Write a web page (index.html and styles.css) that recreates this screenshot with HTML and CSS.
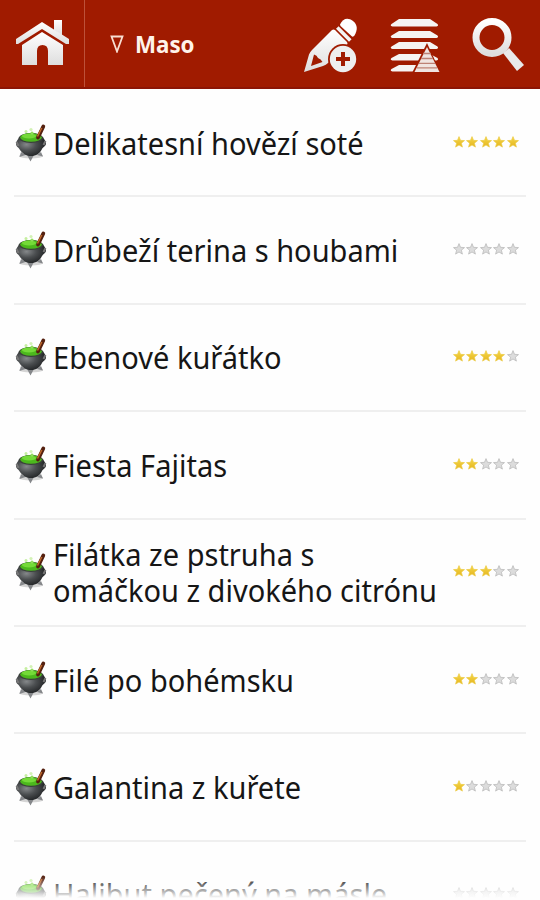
FILE: index.html
```html
<!DOCTYPE html>
<html lang="cs">
<head>
  <meta charset="UTF-8">
  <meta name="viewport" content="width=device-width, initial-scale=1.0">
  <title>Maso</title>
  <link rel="stylesheet" href="styles.css">
</head>
<body>
  <!-- shared icons -->
  <svg class="sprite" aria-hidden="true">
    <defs>
      <linearGradient id="metal" x1="0" y1="0" x2="0" y2="1">
        <stop offset="0" stop-color="#fff"/>
        <stop offset="1" stop-color="#dedede"/>
      </linearGradient>
      <radialGradient id="iron" cx="0.35" cy="0.4" r="0.7">
        <stop offset="0" stop-color="#85888a"/>
        <stop offset="0.45" stop-color="#4b4e50"/>
        <stop offset="1" stop-color="#1c1e20"/>
      </radialGradient>
      <linearGradient id="gold" x1="0" y1="0" x2="0" y2="1">
        <stop offset="0" stop-color="#f5d84a"/>
        <stop offset="1" stop-color="#e5b51f"/>
      </linearGradient>
    </defs>
    <symbol id="pot" viewBox="0 0 32 40">
      <ellipse cx="16" cy="33" rx="12" ry="2.500" fill="#999" opacity="0.4"/>
      <path d="M6 29l-1.500 5 6-2zM26 29l2 4.500-6-1.500zM12 32l3.500 6.500L19 32z" fill="#85878a"/>
      <path d="M4 14C3 17 1 18 1 21c0 2.500 2 3 3 4.500 3 5 7 7.500 12 7.500s9-2.500 11-7c1-2 4-3 4-5.500 0-3-2-3.500-3-6.500z" fill="url(#iron)"/>
      <path d="M1.500 19l2 4M30.500 18l-2 4" stroke="#777" stroke-width="2"/>
      <ellipse cx="16" cy="15" rx="12" ry="5" fill="#3a423a"/>
      <ellipse cx="16" cy="14.500" rx="10.800" ry="4.200" fill="#4cb81d"/>
      <ellipse cx="14" cy="13" rx="7" ry="2.400" fill="#74da38"/>
      <circle cx="11" cy="8.500" r="1.500" fill="#c5efa0"/>
      <circle cx="16" cy="6.500" r="1.600" fill="#d3f2b5"/>
      <circle cx="17" cy="10" r="1.600" fill="#90dc5c"/>
      <path d="M23 14.500L28.300 3.500" stroke="#54200f" stroke-width="3.800" stroke-linecap="round"/>
      <path d="M22.500 13.500l4.300-8.500" stroke="#c1682a" stroke-width="1.500"/>
    </symbol>
    <symbol id="star" viewBox="0 0 12 12">
      <path d="M6 .6l1.500 3.700 4 .3-3.100 2.600 1 3.900L6 9l-3.400 2.100 1-3.900L.5 4.600l4-.3z"/>
    </symbol>
  </svg>

  <header class="header">
    <a class="home" href="#" aria-label="Domů">
      <svg width="54" height="48" viewBox="0 0 54 48" fill="url(#metal)">
        <path d="M38 1h8v16l-8-6z"/>
        <path d="M26 3L0 20v5h2L26 10l24 15h3v-5z"/>
        <path d="M26 13L6 26v20h15V32q0-6 5.500-6t5.500 6v14h15V26z"/>
      </svg>
    </a>
    <div class="category"><svg width="14" height="18" viewBox="0 0 14 18"><path d="M1.500 1.500h11L7 16.500z" fill="none" stroke="#f8dfd2" stroke-width="1.800"/></svg><span>Maso</span></div>
    <nav class="actions">
      <svg width="54" height="56" viewBox="0 0 54 56">
        <path d="M0 55L5 37.500Q6 35 8 33L28 13q1.500-1 3 0L43 25q1 1.500 0 3L24 46q-2 2-5 3z" fill="url(#metal)"/>
        <path d="M10 37.500q3 .5 4 3.500 3 1 4.500 4L7 49z" fill="#a01b00"/>
        <path d="M33.300 10.500l13 13" stroke="#f4f4f4" stroke-width="3.600"/>
        <path d="M36 7.500C39 1 44 0 49 4s4.500 9 1.500 14.500q-1 1.500-2.500 1L36.500 9z" fill="#fff"/>
        <circle cx="39" cy="42" r="15" fill="#a01b00"/>
        <circle cx="39" cy="42" r="13.200" fill="#eee"/>
        <path d="M39 35v14M32 42h14" stroke="#a01b00" stroke-width="4"/>
      </svg>
      <svg width="50" height="56" viewBox="0 0 50 56">
        <path d="M9 2h31l7.500 5q1.500 2-1 2.500h-44Q-.5 9 1.500 7zM9 14h31l7.500 4.500q1.500 2-1 2.500h-44q-3-.5-1-2.500zM9 25h31l7.500 4.500q1.500 2-1 2.500h-44q-3-.5-1-2.500zM9 37h31l7.500 4q1.500 2-1 2.500h-44q-3-.5-1-2.500zM9 48h31l7.500 4q1.500 2-1 2.500h-44q-3-.5-1-2.500z" fill="#f6f4f3"/>
        <path d="M37 26L22 56h16l10-6z" fill="#a01b00"/>
        <path d="M37 30L24.500 55h25z" fill="#f0e4e1"/>
        <path d="M33 36.500h8M31 41.500h12M29 46.300h16M27 50.800h20" stroke="#bd8175" stroke-width="1.300"/>
      </svg>
      <svg width="54" height="56" viewBox="0 0 54 56">
        <path d="M31 36l6-5 15 17-7 6z" fill="#e9e9e9"/>
        <circle cx="20" cy="20.500" r="16" fill="none" stroke="url(#metal)" stroke-width="7"/>
      </svg>
    </nav>
  </header>

  <ul class="recipes" id="recipes"></ul>

  <script>
    const recipes = [
      { title: 'Delikatesní hovězí soté', stars: 5 },
      { title: 'Drůbeží terina s houbami', stars: 0 },
      { title: 'Ebenové kuřátko', stars: 4 },
      { title: 'Fiesta Fajitas', stars: 2 },
      { title: 'Filátka ze pstruha s<br>omáčkou z divokého citrónu', stars: 3 },
      { title: 'Filé po bohémsku', stars: 2 },
      { title: 'Galantina z kuřete', stars: 1 },
      { title: 'Halibut pečený na másle', stars: 0 }
    ];

    function renderStars(count) {
      let html = '';
      for (let i = 0; i < 5; i++) {
        html += `<svg class="star ${i < count ? 'star-on' : ''}"><use href="#star"/></svg>`;
      }
      return html;
    }

    const list = document.getElementById('recipes');
    recipes.forEach(recipe => {
      const row = document.createElement('li');
      row.className = 'recipe';
      row.innerHTML = `
        <svg class="pot"><use href="#pot"/></svg>
        <div class="title"><span>${recipe.title}</span></div>
        <div class="rating">${renderStars(recipe.stars)}</div>
      `;
      list.appendChild(row);
    });
  </script>
</body>
</html>
```

FILE: styles.css
```css
body {
  margin: 0;
  height: 900px;
  overflow: hidden;
  position: relative;
  background: #fefefe;
  font-family: "Noto Sans", "Open Sans", sans-serif;
}

/* fade at the bottom edge of the list */
body::after {
  content: "";
  position: absolute;
  left: 0;
  right: 0;
  bottom: 0;
  height: 24px;
  background: linear-gradient(rgba(254, 254, 254, 0), rgba(254, 254, 254, 0.75) 70%, #fefefe 92%);
}

.sprite {
  position: absolute;
  width: 0;
  height: 0;
}

.header {
  display: flex;
  box-sizing: border-box;
  height: 89px;
  background: #a01b00;
  border-bottom: 2px solid #8c1505;
}

.home {
  box-sizing: border-box;
  width: 85px;
  padding: 19px 0 0 16px;
  border-right: 1px solid #bd5139;
}

.category {
  display: flex;
  align-items: center;
  gap: 11px;
  padding-left: 25px;
  color: #fff3ea;
  font-size: 24px;
  font-weight: bold;
}

.category span {
  transform: scaleX(0.93);
  transform-origin: left;
}

.actions {
  display: flex;
  gap: 32px;
  margin-left: auto;
  padding: 17px 14px 0 0;
}

.recipes {
  list-style: none;
  box-sizing: border-box;
  height: 811px;
  margin: 0;
  padding: 1px 14px 0;
  overflow: hidden;
}

.recipe {
  display: flex;
  align-items: center;
  box-sizing: border-box;
  height: 107.4px;
  border-bottom: 2px solid #efefef;
}

.pot {
  flex: none;
  width: 32px;
  height: 40px;
  margin-left: 1px;
}

.title {
  flex: 1;
  width: 0;
  padding-left: 6px;
  color: #161616;
  font-size: 31px;
  line-height: 36px;
  white-space: nowrap;
}

.title span {
  display: inline-block;
  transform: scaleX(0.936);
  transform-origin: left;
}

.rating {
  display: flex;
  gap: 1.6px;
  margin: -2px 7px 0 0;
}

.star {
  width: 12px;
  height: 12px;
  fill: #dcdcdc;
  stroke: #b4b4b4;
  stroke-width: 0.7px;
}

.star-on {
  fill: url(#gold);
  stroke: #edcb45;
}
```
